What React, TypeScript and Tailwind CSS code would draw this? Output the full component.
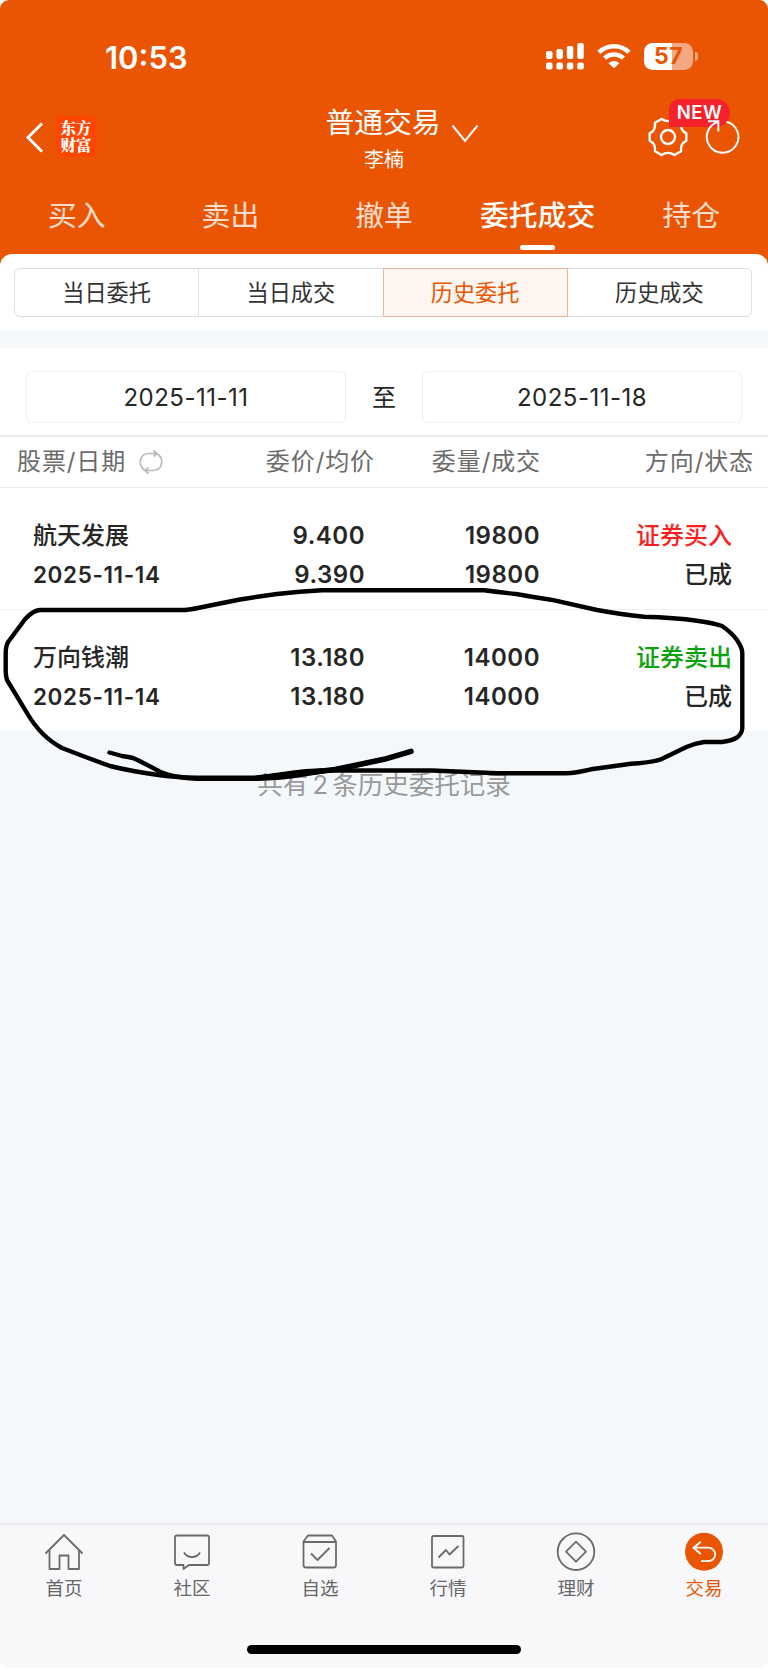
import type { ReactNode } from "react";
import clsx from "clsx";

interface Order {
  name: string;
  date: string;
  price: string;
  avgPrice: string;
  amount: string;
  dealt: string;
  side: "buy" | "sell";
  sideLabel: string;
  status: string;
}

const orders: Order[] = [
  {
    name: "航天发展",
    date: "2025-11-14",
    price: "9.400",
    avgPrice: "9.390",
    amount: "19800",
    dealt: "19800",
    side: "buy",
    sideLabel: "证券买入",
    status: "已成",
  },
  {
    name: "万向钱潮",
    date: "2025-11-14",
    price: "13.180",
    avgPrice: "13.180",
    amount: "14000",
    dealt: "14000",
    side: "sell",
    sideLabel: "证券卖出",
    status: "已成",
  },
];

const tabs = ["买入", "卖出", "撤单", "委托成交", "持仓"];
const filters = ["当日委托", "当日成交", "历史委托", "历史成交"];

function StatusBar() {
  return (
    <div className="flex h-[94px] items-start justify-between pt-[38px] pr-[70px] pl-[105px]">
      <span className="text-[31px] leading-[39px] font-semibold">10:53</span>
      <div className="flex items-center pt-[5px]">
        <svg width="38" height="27" viewBox="0 0 38 27" fill="#fff">
          <rect x="0" y="8" width="6.5" height="8" rx="2" />
          <rect x="10.4" y="6" width="6.5" height="10" rx="2" />
          <rect x="20.8" y="3" width="6.5" height="13" rx="2" />
          <rect x="31.3" y="0" width="6.5" height="16" rx="2" />
          <rect x="0" y="19.5" width="6.5" height="7" rx="2" />
          <rect x="10.4" y="19.5" width="6.5" height="7" rx="2" />
          <rect x="20.8" y="19.5" width="6.5" height="7" rx="2" />
          <rect x="31.3" y="19.5" width="6.5" height="7" rx="2" />
        </svg>
        <svg className="ml-[13px]" width="34" height="27" viewBox="0 0 34 27" fill="none" stroke="#fff" strokeWidth="4.6">
          <path d="M2 9.3A21.5 21.5 0 0 1 32 9.3" />
          <path d="M7.6 15.2A13.6 13.6 0 0 1 26.4 15.2" />
          <path d="M11.6 20.2A8 8 0 0 1 22.4 20.2L17 25.2Z" fill="#fff" stroke="none" />
        </svg>
        <div className="ml-[13px] flex h-[27px] w-[49px] items-center justify-center rounded-[8.5px] bg-[linear-gradient(90deg,#fff_57%,#f4a881_57%)] text-[23px] font-bold tracking-[0.5px] text-[#ea5504]">
          57
        </div>
        <div className="ml-[2px] h-[9px] w-[3px] rounded-r-full bg-[#f4a881]" />
      </div>
    </div>
  );
}

function TitleBar() {
  return (
    <div className="grid h-[92px] grid-cols-[1fr_auto_1fr]">
      <div className="flex items-start pt-[22px] pl-[25px]">
        <svg className="mt-[6px]" width="19" height="31" viewBox="0 0 19 31" fill="none" stroke="#fff" strokeWidth="3">
          <path d="M17 1.5L3 15.5L17 29.5" />
        </svg>
        <div className="ml-[12px] flex h-[41px] w-[41px] items-center justify-center rounded-[7px] bg-[#ff4500] pb-px">
          <span className="w-[32px] font-['Noto_Serif_CJK_SC','Noto_Sans_CJK_SC',serif] text-[15.5px] leading-[17.5px] font-black break-all">
            东方财富
          </span>
        </div>
      </div>
      <div className="flex flex-col items-center">
        <div className="ml-[36px] flex items-start">
          <span className="text-[28.8px] leading-[58px]">普通交易</span>
          <svg className="mt-[30px] ml-[10px]" width="28" height="19" viewBox="0 0 28 19" fill="none" stroke="#fff" strokeWidth="2">
            <path d="M1.5 1.5L14 17L26.5 1.5" />
          </svg>
        </div>
        <span className="-mt-[7px] text-[20px] leading-[30px]">李楠</span>
      </div>
      <div className="flex justify-end pt-[22px] pr-[27px]">
        <div className="relative">
          <svg width="40" height="42" viewBox="0 0 40 42" fill="none" stroke="#fff" strokeWidth="2.4" strokeLinejoin="round">
            <path d="M13.6 3Q20 7.200 26.4 3L33 6.8Q32.200 14.700 38.300 17.200V24.800Q32.200 27.300 33 35.200L26.4 39Q20 34.800 13.6 39L7 35.200Q7.800 27.300 1.700 24.800V17.200Q7.800 14.700 7 6.8Z" />
            <circle cx="20" cy="21" r="7" />
          </svg>
          <span className="absolute -top-[17px] left-[21px] flex h-[28px] w-[61px] items-center justify-center rounded-[14px] rounded-tl-[10px] rounded-bl-none bg-[#f5222b] text-[18.5px] font-semibold tracking-[0.5px]">
            NEW
          </span>
        </div>
        <svg className="relative ml-[17px]" width="36" height="42" viewBox="0 0 36 42" fill="none" stroke="#fff" strokeWidth="2">
          <path d="M21.5 5.7A15.8 15.8 0 1 1 13 5.9" />
          <path d="M3 5.2H13.3V15.5" />
        </svg>
      </div>
    </div>
  );
}

function Cell({ top, bottom, className }: { top: ReactNode; bottom: ReactNode; className?: string }) {
  return (
    <div className={clsx("flex flex-col", className)}>
      {top}
      {bottom}
    </div>
  );
}

function OrderRow({ order }: { order: Order }) {
  return (
    <div className="grid h-[122px] grid-cols-[230px_135px_175px_1fr] border-b border-[#f0f0f0] pt-[28px] pr-[36px] text-[24px] leading-[39px] font-medium text-[#262626] last:h-[121px] last:border-b-0">
      <Cell
        className="pl-[33px]"
        top={<span>{order.name}</span>}
        bottom={<span className="text-[22.5px] font-semibold tracking-[0.6px]">{order.date}</span>}
      />
      <Cell
        className="items-end font-semibold tracking-[0.5px]"
        top={<span>{order.price}</span>}
        bottom={<span>{order.avgPrice}</span>}
      />
      <Cell
        className="items-end font-semibold tracking-[0.5px]"
        top={<span>{order.amount}</span>}
        bottom={<span>{order.dealt}</span>}
      />
      <Cell
        className="items-end"
        top={
          <span className={order.side === "buy" ? "text-[#fb1f1f]" : "text-[#0aa30a]"}>{order.sideLabel}</span>
        }
        bottom={<span>{order.status}</span>}
      />
    </div>
  );
}

const navItems: { label: string; active?: boolean; icon: ReactNode }[] = [
  {
    label: "首页",
    icon: (
      <>
        <path d="M1.5 21.5L20 3L38.5 21.5" />
        <path d="M5.5 18V37H15.5V23.5H24.5V37H35V18" />
      </>
    ),
  },
  {
    label: "社区",
    icon: (
      <>
        <path d="M5 3.5H35Q37 3.5 37 5.5V31Q37 33 35 33H17L11.5 37V33H5Q3 33 3 31V5.5Q3 3.5 5 3.5Z" />
        <path d="M12 20.5C15.5 26.5 24.5 26.5 28 20.5" />
      </>
    ),
  },
  {
    label: "自选",
    icon: (
      <>
        <path d="M3.5 9.5L8 3.5H32L36 9.5V33Q36 35.5 33.5 35.5H6Q3.5 35.5 3.5 33Z" />
        <path d="M3.5 10H36M11 21.5L17.5 28L29.5 16" />
      </>
    ),
  },
  {
    label: "行情",
    icon: (
      <>
        <rect x="4" y="4" width="31.5" height="31.5" rx="1.5" />
        <path d="M10.5 25.5L18 18L21.5 22.5L30.5 14" />
      </>
    ),
  },
  {
    label: "理财",
    icon: (
      <>
        <circle cx="20" cy="19.7" r="18.3" />
        <path d="M20 9.7L30 19.7L20 29.7L10 19.7Z" />
      </>
    ),
  },
  {
    label: "交易",
    active: true,
    icon: (
      <>
        <circle cx="20" cy="19.7" r="19" fill="#ea5504" stroke="none" />
        <path d="M16.8 9.8L9.5 15.7L16.8 22M9.5 15.7H24C33.5 15.7 33.5 29.2 24 29.2H17" stroke="#fff" />
      </>
    ),
  },
];

// freehand marker around the second order
function MarkerStroke() {
  return (
    <svg
      className="pointer-events-none absolute top-[490px] left-0"
      width="768"
      height="320"
      viewBox="0 0 768 320"
      fill="none"
      stroke="#000"
      strokeWidth="4.4"
      strokeLinecap="round"
      strokeLinejoin="round"
    >
      <path d="M40 120H185Q192 119.5 210 115.5L240 109.5Q262 106 277 104Q300 101.5 322 100.3H484Q502 102.5 516 104Q535 107.5 551 109.7L597 120Q622 124.5 644 126.7Q675 127.5 697 130.7Q714 133 722 136Q731 142 737 150Q742.3 158 742.3 163V238Q742 244 737 247.5Q731 251 722 252H704Q695 253.5 687 256.7L661 269.3Q648 273 631 273.7L591 279.3Q575 283 566 283.3H497L432 280.5H320Q305 281 293 282.7L257 287.7H197Q177 287.5 160 285.3Q130 281 110 276Q85 267 62 258Q51 252 43 244Q34 235 27 223L7 190Q5.7 186 5.7 181V163Q5.7 156 8.3 151.7L25 129.3Q33 120.5 40 120Z" />
      <path d="M109.5 262.5L122 266Q129 267 133 268Q142 272 160 281.7Q172 286 180 287Q190 288.7 197 288.7H257Q278 288 293 286L347 277.7L384 269.3L411 261.5" />
      <path d="M257 288Q278 286 293 284.5L335 279.5L384 269.3L411 261.3" strokeWidth="5.5" />
    </svg>
  );
}

export default function App() {
  return (
    <div className="h-[1669px] w-[768px] bg-white font-['Inter','Noto_Sans_CJK_SC',sans-serif]">
      <div className="flex h-[1668px] flex-col overflow-hidden rounded-[9px] bg-[#f4f8fa]">
        <div className="bg-[#ea5504]">
          <header className="text-white">
            <StatusBar />
            <TitleBar />
            <nav className="grid h-[68px] grid-cols-5 text-[28.8px]">
              {tabs.map((tab) => (
                <div key={tab} className="flex flex-col items-center">
                  <span
                    className={clsx("h-[59px] leading-[59px]", tab === "委托成交" ? "font-medium" : "text-white/80")}
                  >
                    {tab}
                  </span>
                  {tab === "委托成交" && <div className="h-[5px] w-[35px] rounded-full bg-white" />}
                </div>
              ))}
            </nav>
          </header>
          <div className="rounded-t-[12px] bg-white py-[14px] pr-[16px] pl-[14px]">
            <div className="flex h-[49px] text-[22.2px] text-[#333]">
              {filters.map((filter) => (
                <button
                  key={filter}
                  className={clsx(
                    "-mr-px flex-1 border first:rounded-l-[6px] last:mr-0 last:rounded-r-[6px]",
                    filter === "历史委托"
                      ? "relative border-[#f0b598] bg-[#fff5f1] text-[#ea5504]"
                      : "border-[#dcdfe5]"
                  )}
                >
                  {filter}
                </button>
              ))}
            </div>
          </div>
        </div>

        <section className="mt-[17px] bg-white">
          <div className="flex h-[87px] items-center px-[26px] pt-[11px] text-[24px] text-[#262626]">
            <div className="flex h-[52px] flex-1 items-center justify-center rounded-[6px] border border-[#f0f0f0] pt-[2px] tracking-[0.5px]">
              2025-11-11
            </div>
            <span className="w-[76px] pt-px text-center">至</span>
            <div className="flex h-[52px] flex-1 items-center justify-center rounded-[6px] border border-[#f0f0f0] pt-[2px] tracking-[0.5px]">
              2025-11-18
            </div>
          </div>
          <div className="grid h-[53px] grid-cols-[230px_145px_166px_1fr] items-center border-y border-t-2 border-[#ebebeb] pr-[14px] text-[24px] tracking-[0.9px] text-[#6b6b6b]">
            <div className="flex items-center pl-[17px]">
              股票/日期
              <svg className="ml-[12px]" width="26" height="26" viewBox="0 0 26 26" fill="none" stroke="#bbb" strokeWidth="1.7">
                <path d="M6.5 21C-0.5 16 1.5 4.5 11 4.5H18M15.5 1.5L19 4.5L15.5 7.5" />
                <path d="M19.5 5C26.5 10 24.5 21.5 15 21.5H8M10.5 18.5L7 21.5L10.5 24.5" />
              </svg>
            </div>
            <span className="text-right">委价/均价</span>
            <span className="text-right">委量/成交</span>
            <span className="text-right">方向/状态</span>
          </div>
          {orders.map((order) => (
            <OrderRow key={order.name} order={order} />
          ))}
        </section>

        <p className="mt-[35px] text-center text-[25.5px] leading-[38px] text-[#999] [word-spacing:-3px]">
          共有 2 条历史委托记录
        </p>

        <footer className="mt-auto h-[145px] border-t-2 border-[#e9ebed] bg-[#f8f8fb]">
          <nav className="grid grid-cols-6 pt-[7px]">
            {navItems.map((item) => (
              <div
                key={item.label}
                className={clsx(
                  "flex flex-col items-center text-[18.5px] leading-[26px]",
                  item.active ? "text-[#ea5504]" : "text-[#666]"
                )}
              >
                <svg width="40" height="40" viewBox="0 0 40 40" fill="none" stroke="#6b6b6b" strokeWidth="1.8" strokeLinejoin="round">
                  {item.icon}
                </svg>
                <span className="mt-[3px]">{item.label}</span>
              </div>
            ))}
          </nav>
          <div className="mx-auto mt-[44px] h-[9px] w-[274px] rounded-full bg-black" />
        </footer>
      </div>
      <MarkerStroke />
    </div>
  );
}
